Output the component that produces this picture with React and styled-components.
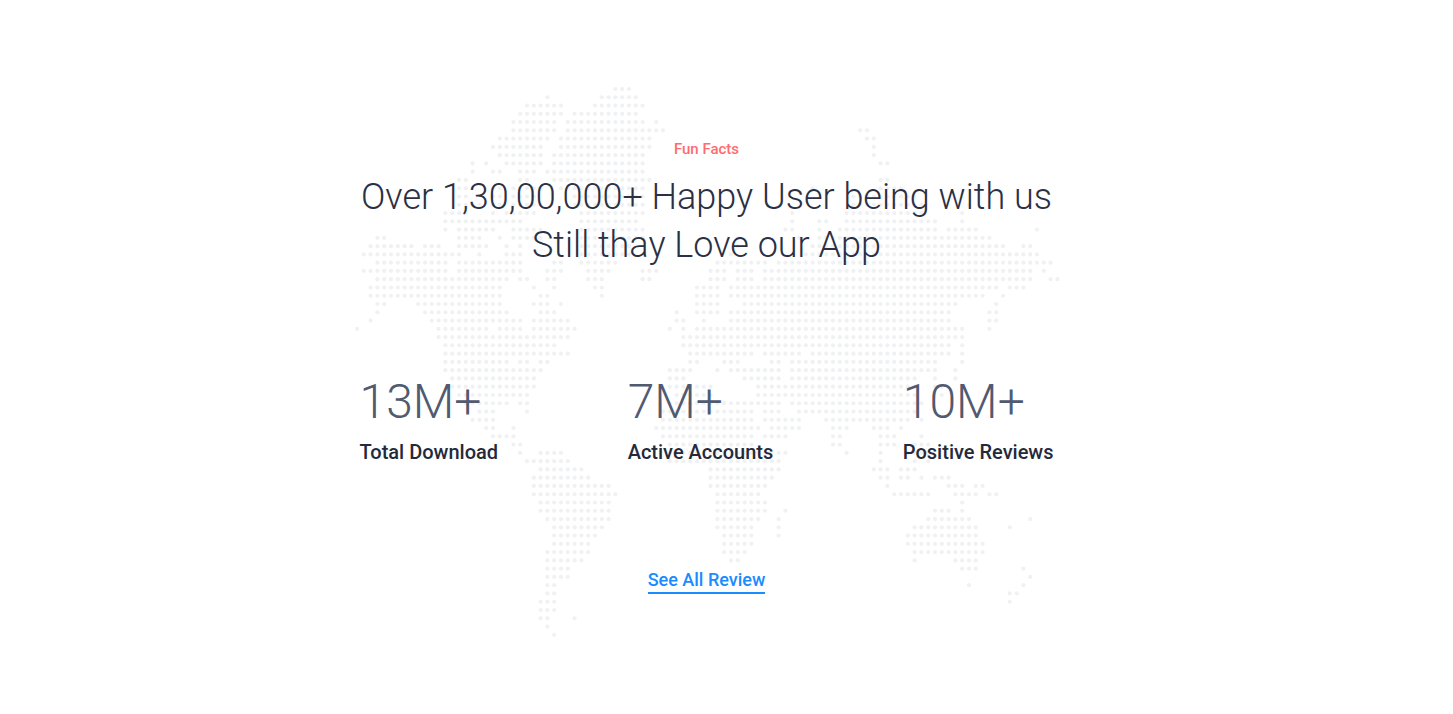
import React from 'react';
import styled, { createGlobalStyle } from 'styled-components';

const GlobalStyle = createGlobalStyle`
  html, body {
    margin: 0;
    background: #fff;
    font-family: Roboto, "Liberation Sans", sans-serif;
  }
`;

// one line per map row, "a-b" is a run of dots between two grid columns
const MAP_ROWS = [
  '38-40',
  '28 36-41',
  '25-30 35-42',
  '24-30 32-41',
  '23-29 31-42 44',
  '23-29 31-45 74-75',
  '21-28 30-43 75-76',
  '20-27 30-43 76',
  '21-27 29-42 76',
  '17 19 22-27 29-42 77-78',
  '17 20-21 24-26 28-42',
  '15-16 24-25 29-43 77-78',
  '15-16 20-21 23-27 30-42 67 77-80',
  '15-16 20-21 23-26 32-42 73-82',
  '15-18 20-21 23-26 32-42 73-83 90',
  '13-16 20 22-26 33-42 64 72-83 89',
  '13-24 33-41 64 68-69 72-85 89',
  '13 15-19 20 23-27 33-42 63-64 68 71-85 87-91 100',
  '3-4 15-18 21 23-27 33-42 56 65 68-93',
  '2-8 10-12 15-19 22 24 33-40 56 67-95 98-99',
  '1-15 18 22-24 33-40 55 66-100',
  '3-13 15-24 29-30 33-38 53-60 62-102',
  '1-13 15-24 28-30 34-37 42-44 52-54 56-58 60-99 101',
  '3-22 24-25 28-29 34-36 42-43 52-54 56-58 60-99 102-103',
  '2-21 26 29 35-36 50-53 55-94 96-98',
  '2-21 27-28 36 50-53 55-92 95',
  '3-4 9-21 26-28 30 50-53 57-88 94',
  '3 10-22 27-29 47 50-53 55-87 93-94',
  '2 11-24 26-31 47-48 51 55-87 93-94',
  '0 12-19 21-24 26-32 46 48 50-89 93',
  '12-31 48-89',
  '13-29 48-87 89',
  '13-31 49-58 60-63 64-65 67-87 89',
  '13-22 24-25 27-28 49-50 54-56 61-62 64-85 89',
  '13-27 46-49 53 55-62 64-83 84-85 88',
  '14-26 46-48 57-62 64-82 85 88',
  '14-26 46-52 59-82 85-86',
  '15-25 47-52 59-82 86',
  '16-22 24-25 46-62 64-83',
  '18-20 25 45-58 60-62 65-82',
  '17-20 45-58 60-65 69-81 83',
  '19-20 23 44-59 61-65 70-72 76-78 80',
  '20-23 45-58 60-63 70-71 77-79 83',
  '23-24 46-58 70-71 77-79 82-84',
  '24 27-30 46-63 72 77 81-84',
  '25-31 46-62 77 82 84',
  '27-33 52-62 76-78 80-82',
  '26-34 52-58 59-61 77-78 80-81 83 85-87',
  '26-37 52-60 78 87-89 91-92',
  '26-38 53-59 79-84 88-91 93-94',
  '27-37 53-60 89',
  '27-37 53-60 63 85-87 89',
  '28-37 53-59 62 84-90 99',
  '29-36 53-58 62 82-91 96',
  '29-35 54-58 62 81-91',
  '29-34 54-58 81-92',
  '28-34 54-57 82-92',
  '28-33 55-56 82 88-91',
  '28-31 89-91 98',
  '28-31 99',
  '28-29 90 98',
  '28-29 96-97',
  '27-29 96',
  '27-29',
  '27-28 32',
  '28',
  '29',
];

const STEP_X = 6.8;
const STEP_Y = 8.27;

const mapDots = MAP_ROWS.flatMap((row, r) =>
  row.split(' ').flatMap((run) => {
    const [from, to = from] = run.split('-').map(Number);
    const dots = [];
    for (let c = from; c <= to; c++) dots.push([c, r]);
    return dots;
  })
);

const stats = [
  { value: '13M+', label: 'Total Download' },
  { value: '7M+', label: 'Active Accounts' },
  { value: '10M+', label: 'Positive Reviews' },
];

const App = () => {
  return (
    <Section>
      <GlobalStyle />
      <MapBackdrop width="712" height="556" viewBox="0 0 712 556" aria-hidden="true">
        {mapDots.map(([c, r]) => (
          <circle key={`${c}-${r}`} cx={3 + c * STEP_X} cy={3 + r * STEP_Y} r="2.1" />
        ))}
      </MapBackdrop>
      <Content>
        <Eyebrow>Fun Facts</Eyebrow>
        <Heading>
          Over 1,30,00,000+ Happy User being with us
          <br />
          Still thay Love our App
        </Heading>
        <StatRow>
          {stats.map((stat) => (
            <Stat key={stat.label}>
              <StatValue>{stat.value}</StatValue>
              <StatLabel>{stat.label}</StatLabel>
            </Stat>
          ))}
        </StatRow>
        <ReviewLink href="#reviews">See All Review</ReviewLink>
      </Content>
    </Section>
  );
};

const Section = styled.section`
  position: relative;
  width: 1413px;
  height: 714px;
  padding-top: 139px;
  box-sizing: border-box;
  overflow: hidden;
`;

const MapBackdrop = styled.svg`
  position: absolute;
  left: 354px;
  top: 86px;
  fill: #f0f1f3;
`;

const Content = styled.div`
  position: relative;
  width: 694px;
  margin: 0 auto;
  display: flex;
  flex-direction: column;
  align-items: center;
`;

const Eyebrow = styled.div`
  font-size: 15px;
  line-height: 20px;
  font-weight: 500;
  color: #ff6b70;
`;

const Heading = styled.h2`
  margin: 14px 0 0;
  width: 100%;
  font-size: 36px;
  line-height: 48px;
  font-weight: 300;
  text-align: center;
  white-space: nowrap;
  color: #2b3044;
`;

const StatRow = styled.div`
  width: 100%;
  margin-top: 105px;
  display: flex;
  justify-content: space-between;
`;

const Stat = styled.div`
  display: flex;
  flex-direction: column;
  align-items: flex-start;
`;

const StatValue = styled.div`
  font-size: 48px;
  line-height: 56px;
  font-weight: 300;
  color: #505a70;
`;

const StatLabel = styled.div`
  margin-top: 8px;
  font-size: 20px;
  line-height: 28px;
  font-weight: 500;
  white-space: nowrap;
  color: #252a3a;
`;

const ReviewLink = styled.a`
  margin-top: 102px;
  font-size: 18px;
  line-height: 24px;
  font-weight: 500;
  color: #1a8cff;
  text-decoration: none;
  border-bottom: 2px solid #1a8cff;
`;

export default App;
